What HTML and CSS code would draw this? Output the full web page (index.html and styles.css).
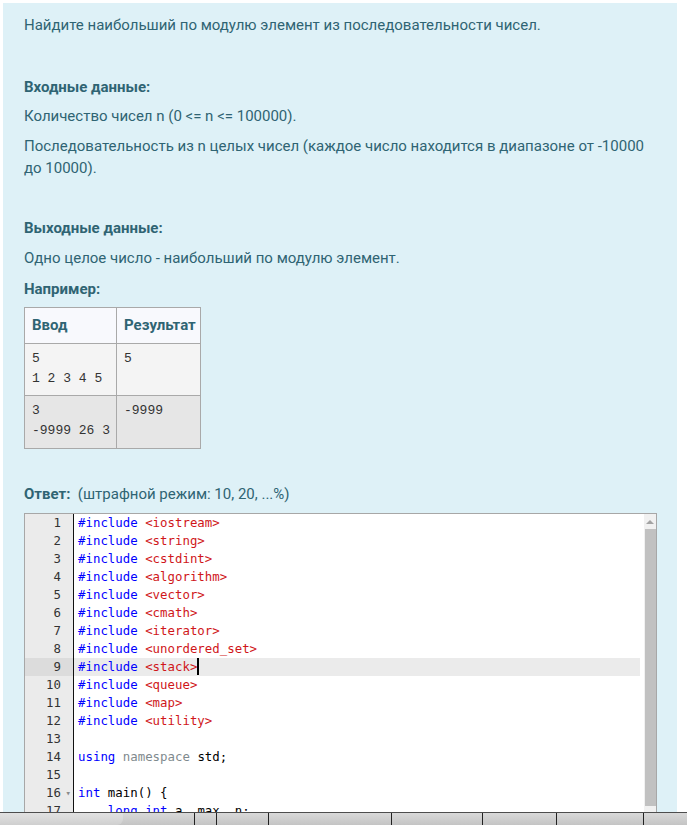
FILE: index.html
```html
<!DOCTYPE html>
<html lang="ru">
<head>
<meta charset="utf-8">
<title>Задача</title>
<link rel="stylesheet" href="styles.css">
</head>
<body>
<div class="panel">
  <p class="lead">Найдите наибольший по модулю элемент из последовательности чисел.</p>
  <p class="head h-in"><strong>Входные данные:</strong></p>
  <p class="para p1">Количество чисел n (0 &lt;= n &lt;= 100000).</p>
  <p class="para p2">Последовательность из n целых чисел (каждое число находится в диапазоне от -10000 до 10000).</p>
  <p class="head h-out"><strong>Выходные данные:</strong></p>
  <p class="para p3">Одно целое число - наибольший по модулю элемент.</p>
  <p class="head h-ex"><strong>Например:</strong></p>
  <table class="examples">
    <colgroup><col class="c1"><col class="c2"></colgroup>
    <thead>
      <tr><th>Ввод</th><th>Результат</th></tr>
    </thead>
    <tbody>
      <tr class="r1"><td><pre>5
1 2 3 4 5</pre></td><td><pre>5</pre></td></tr>
      <tr class="r2"><td><pre>3
-9999 26 3</pre></td><td><pre>-9999</pre></td></tr>
    </tbody>
  </table>
  <p class="answer"><strong>Ответ:</strong>&nbsp; (штрафной режим: 10, 20, ...%)</p>
  <div class="editor">
    <div class="gutter">
      <div class="gl">1</div><div class="gl">2</div><div class="gl">3</div><div class="gl">4</div>
      <div class="gl">5</div><div class="gl">6</div><div class="gl">7</div><div class="gl">8</div>
      <div class="gl active">9</div><div class="gl">10</div><div class="gl">11</div><div class="gl">12</div>
      <div class="gl">13</div><div class="gl">14</div><div class="gl">15</div>
      <div class="gl fold">16<span class="arrow">▾</span></div><div class="gl">17</div>
    </div>
    <div class="code">
      <div class="ln"><span class="kw">#include</span> <span class="str">&lt;iostream&gt;</span></div>
      <div class="ln"><span class="kw">#include</span> <span class="str">&lt;string&gt;</span></div>
      <div class="ln"><span class="kw">#include</span> <span class="str">&lt;cstdint&gt;</span></div>
      <div class="ln"><span class="kw">#include</span> <span class="str">&lt;algorithm&gt;</span></div>
      <div class="ln"><span class="kw">#include</span> <span class="str">&lt;vector&gt;</span></div>
      <div class="ln"><span class="kw">#include</span> <span class="str">&lt;cmath&gt;</span></div>
      <div class="ln"><span class="kw">#include</span> <span class="str">&lt;iterator&gt;</span></div>
      <div class="ln"><span class="kw">#include</span> <span class="str">&lt;unordered_set&gt;</span></div>
      <div class="ln active"><span class="kw">#include</span> <span class="str">&lt;stack&gt;</span><span class="cursor"></span></div>
      <div class="ln"><span class="kw">#include</span> <span class="str">&lt;queue&gt;</span></div>
      <div class="ln"><span class="kw">#include</span> <span class="str">&lt;map&gt;</span></div>
      <div class="ln"><span class="kw">#include</span> <span class="str">&lt;utility&gt;</span></div>
      <div class="ln"> </div>
      <div class="ln"><span class="kw">using</span> <span class="ns">namespace</span> std;</div>
      <div class="ln"> </div>
      <div class="ln"><span class="kw">int</span> main() {</div>
      <div class="ln">    <span class="kw">long</span> <span class="kw">int</span> a, max, n;</div>
    </div>
    <div class="vscroll">
      <div class="up"><span class="tri"></span></div>
      <div class="thumb"></div>
    </div>
  </div>
</div>
<div class="taskbar">
  <div class="seg s1"><div class="tab"></div></div>
  <div class="seg s2"></div>
  <div class="seg s3"></div>
  <div class="seg s4"></div>
  <div class="seg s5"></div>
  <div class="seg s6"></div>
  <div class="seg s7"></div>
  <div class="seg s8"></div>
</div>
</body>
</html>
```
FILE: styles.css
```css
html, body {
  margin: 0;
  padding: 0;
  background: #ffffff;
  overflow: hidden;
  height: 825px;
}

body {
  font-family: Roboto, "Liberation Sans", sans-serif;
  font-size: 15px;
  color: #2f6473;
}

.panel {
  margin: 3px 0 0 3px;
  width: 674px;
  height: 822px;
  box-sizing: border-box;
  background: #def1f7;
  padding: 11px 20px 0 21px;
}

p {
  margin: 0;
  line-height: 22px;
}

strong {
  font-weight: 700;
}

.h-in { margin-top: 40px; }
.p1 { margin-top: 7px; }
.p2 { margin-top: 8px; padding-right: 10px; }
.h-out { margin-top: 38px; }
.p3 { margin-top: 8px; }
.h-ex { margin-top: 9px; }

.examples {
  margin-top: 7px;
  border-collapse: collapse;
  table-layout: fixed;
  width: 176px;
}

.examples .c1 { width: 92px; }
.examples .c2 { width: 84px; }

.examples th,
.examples td {
  border: 1px solid #a9a9a9;
  text-align: left;
  vertical-align: top;
  padding: 0 6px 0 7px;
}

.examples th {
  background: #f8f9fd;
  font-weight: 700;
  line-height: 21px;
  padding-top: 7px;
  padding-bottom: 7px;
  color: #2f6473;
}

.examples td {
  padding-top: 5px;
  padding-bottom: 6px;
}

.examples .r1 td { background: #f4f4f4; }
.examples .r2 td { background: #e6e6e6; padding-bottom: 7px; }

.examples pre {
  margin: 0;
  font-family: "Liberation Mono", monospace;
  font-size: 13px;
  line-height: 20px;
  color: #333333;
}

.answer {
  margin-top: 34px;
}

.editor {
  margin-top: 8px;
  width: 633px;
  height: 312px;
  box-sizing: border-box;
  border: 1px solid #a7a7a7;
  background: #ffffff;
  display: flex;
  overflow: hidden;
  font-family: "DejaVu Sans Mono", monospace;
  font-size: 12.4px;
  line-height: 18px;
}

.gutter {
  width: 48px;
  flex: none;
  background: #ebebeb;
  border-right: 1px solid #111111;
  color: #333333;
}

.gl {
  height: 18px;
  text-align: right;
  padding-right: 12px;
  position: relative;
}

.gl.active {
  background: #dcdcdc;
}

.gl .arrow {
  position: absolute;
  right: 2px;
  top: 0;
  font-size: 9px;
  color: #8a8a8a;
}

.code {
  width: 570px;
  flex: none;
  box-sizing: border-box;
  padding-right: 4px;
  color: #000000;
}

.ln {
  height: 18px;
  white-space: pre;
  padding-left: 4px;
  position: relative;
}

.ln.active {
  background: #ebebeb;
}

.kw { color: #0000ff; }
.str { color: #d0161a; }
.ns { color: #7f8a8e; }

.cursor {
  display: inline-block;
  width: 2px;
  height: 17px;
  background: #000000;
  vertical-align: top;
}

.vscroll {
  width: 12px;
  flex: none;
  background: #f1f1f1;
  display: flex;
  flex-direction: column;
  align-items: flex-end;
}

.vscroll .up {
  height: 15px;
  width: 12px;
  display: flex;
  align-items: center;
  justify-content: center;
}

.vscroll .tri {
  width: 0;
  height: 0;
  border-left: 4px solid transparent;
  border-right: 4px solid transparent;
  border-bottom: 4px solid #a3a3a3;
}

.vscroll .thumb {
  width: 11px;
  height: 277px;
  background: #c1c1c1;
}

.taskbar {
  position: fixed;
  left: 0;
  bottom: 0;
  width: 687px;
  height: 12px;
  border-top: 1px solid #4d4d4d;
  background: linear-gradient(#d9d9d9, #c4c4c4);
  display: flex;
}

.seg {
  height: 100%;
  box-sizing: border-box;
  border-left: 1px solid #222222;
}

.s1 { width: 194px; border-left: none; }
.s2 { width: 22px; }
.s3 { width: 52px; }
.s4 { width: 123px; }
.s5 { width: 91px; }
.s6 { width: 74px; }
.s7 { width: 87px; }
.s8 { flex: 1; }

.tab {
  width: 123px;
  height: 100%;
  background: linear-gradient(#e2e2e2, #cfcfcf);
  border-bottom-right-radius: 6px;
}
```
